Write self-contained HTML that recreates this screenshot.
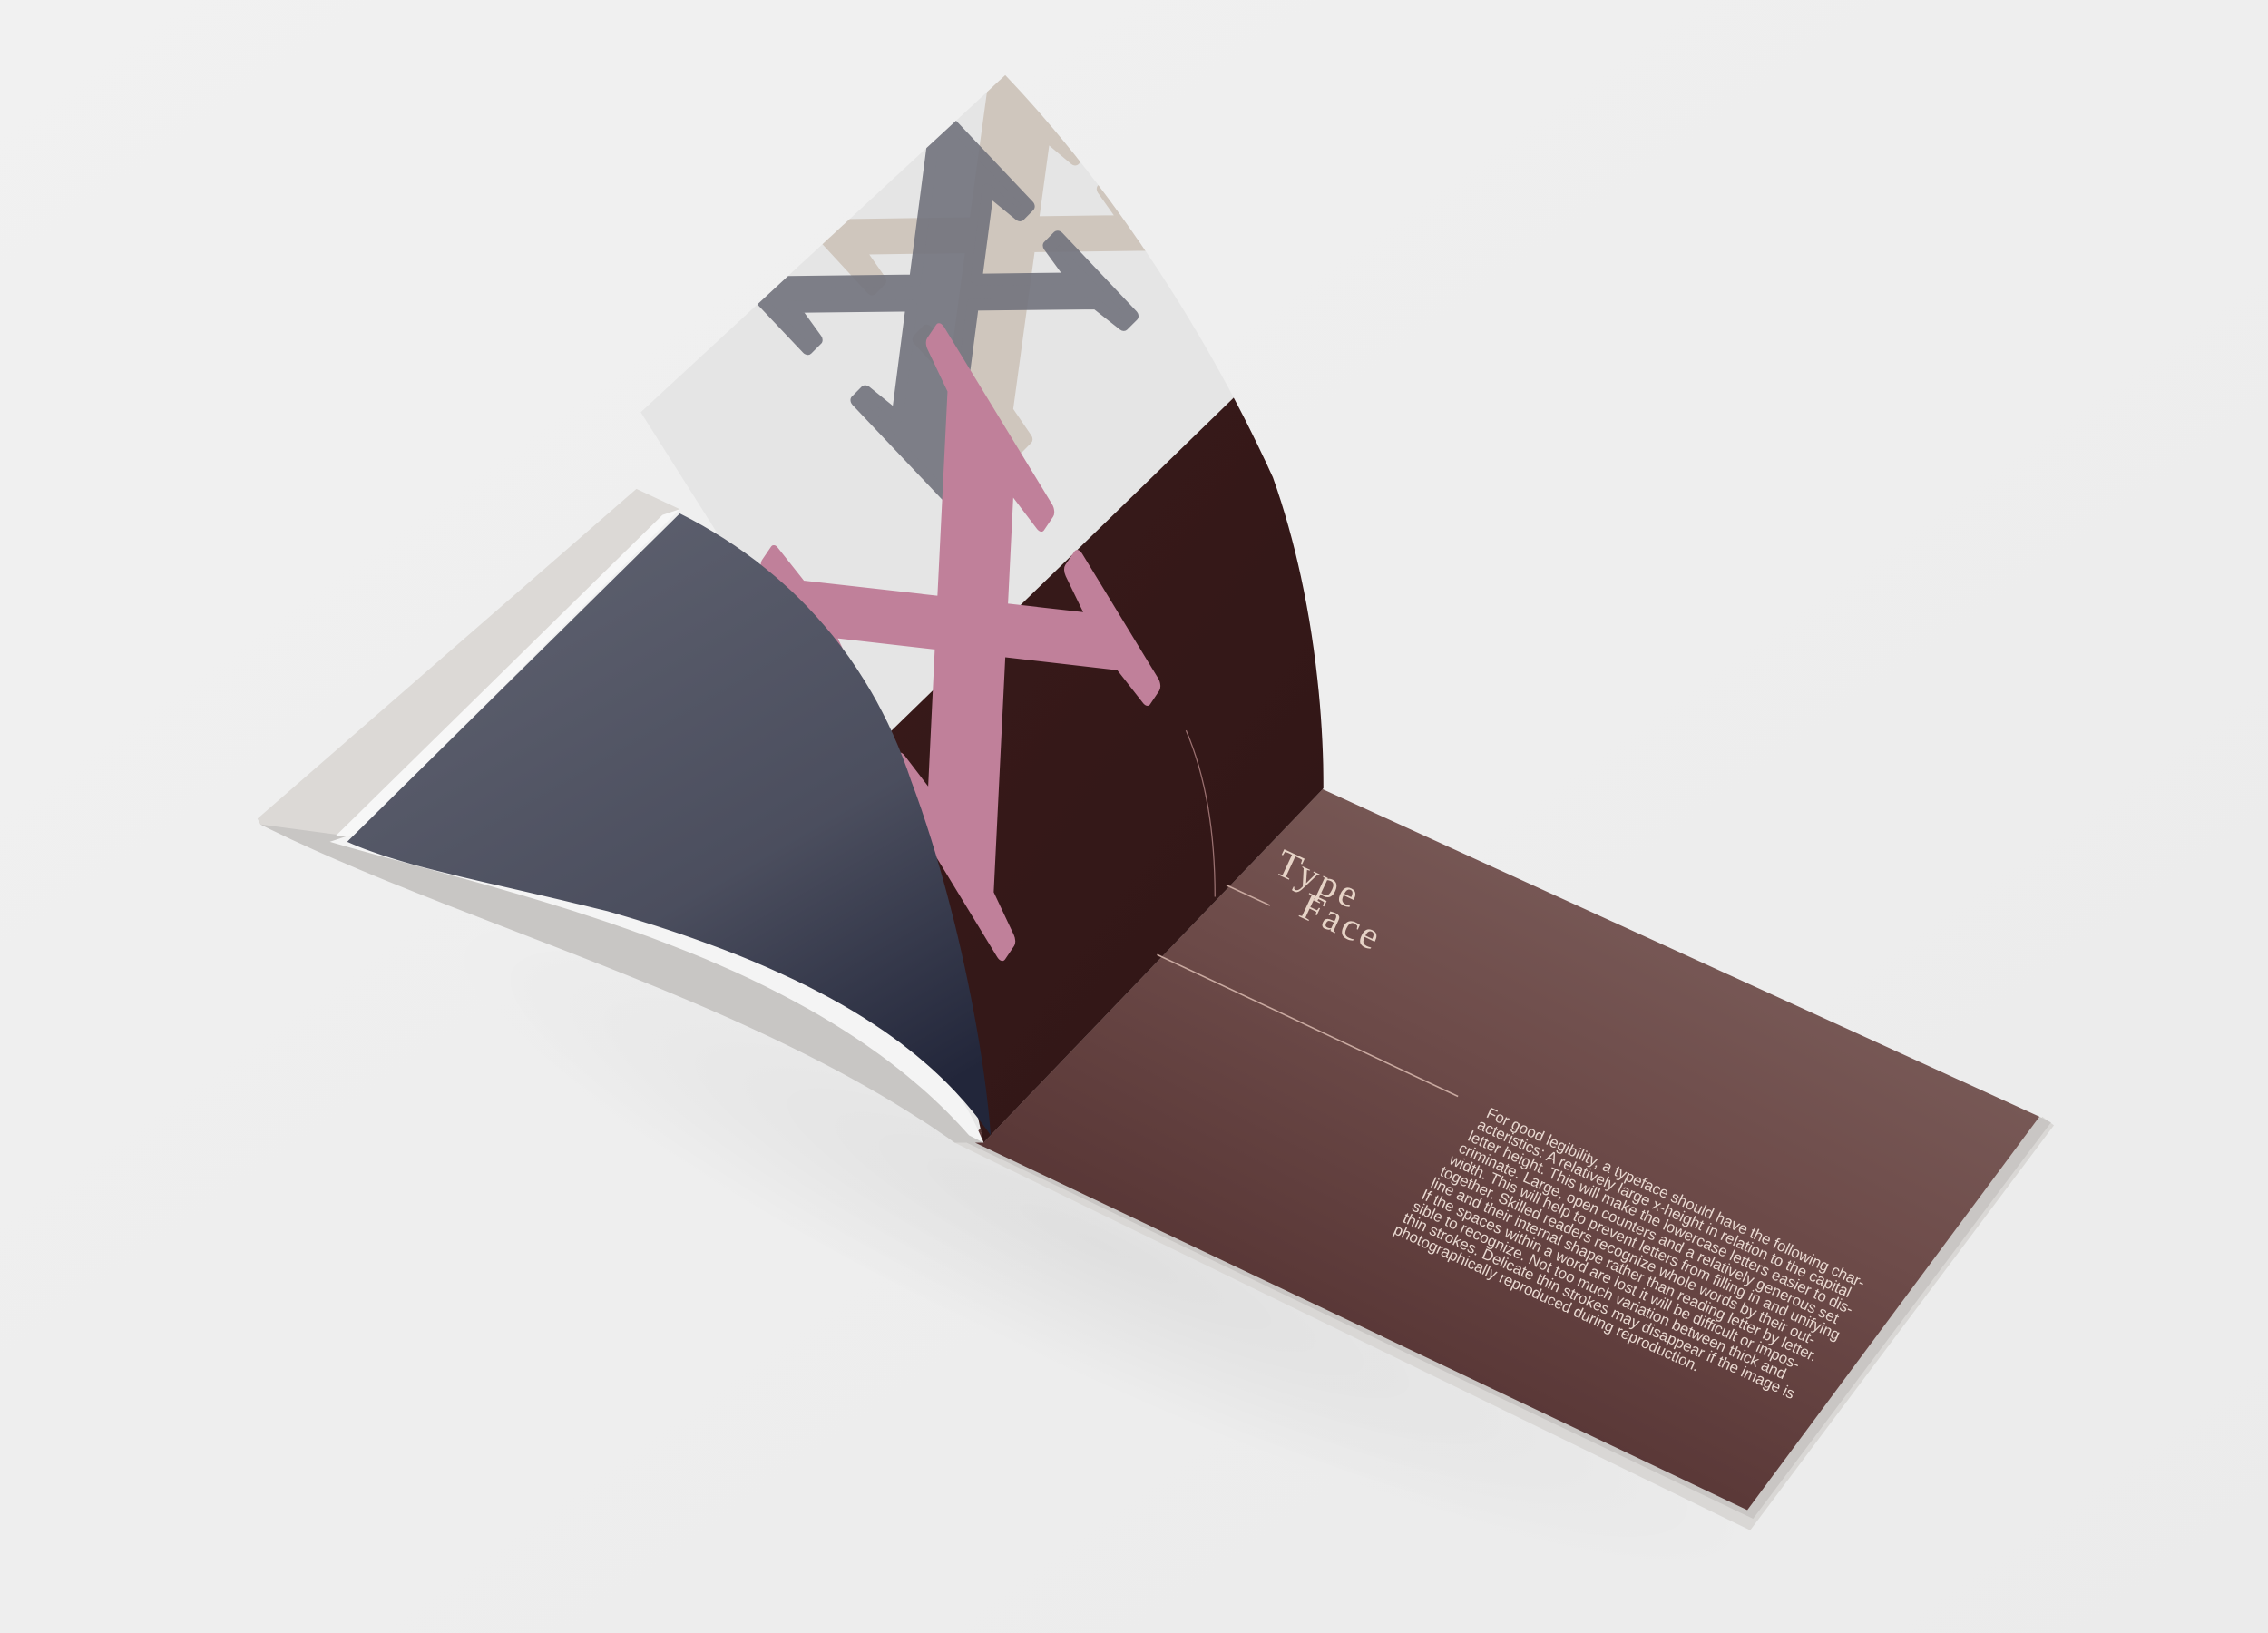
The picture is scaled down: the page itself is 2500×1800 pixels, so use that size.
<!DOCTYPE html>
<html><head><meta charset="utf-8"><style>
html,body{margin:0;padding:0;background:#efefef;}
svg{display:block}
</style></head><body>
<svg width="2500" height="1800" viewBox="0 0 1568 1129" preserveAspectRatio="none" xmlns="http://www.w3.org/2000/svg">
<defs>
<linearGradient id="bg" x1="0" y1="0" x2="1" y2="1"><stop offset="0" stop-color="#f1f1f1"/><stop offset="1" stop-color="#ebebeb"/></linearGradient>
<linearGradient id="rp" x1="0.2" y1="0.9" x2="0.8" y2="0.1"><stop offset="0" stop-color="#4e2c2c"/><stop offset="0.6" stop-color="#6e4c4a"/><stop offset="1" stop-color="#7d605d"/></linearGradient>
<linearGradient id="bl" x1="0.2" y1="0" x2="0.8" y2="1"><stop offset="0" stop-color="#5f6270"/><stop offset="0.6" stop-color="#4b4e5e"/><stop offset="1" stop-color="#22263a"/></linearGradient>
<linearGradient id="br" x1="0" y1="0" x2="1" y2="1"><stop offset="0" stop-color="#3a1b1b"/><stop offset="1" stop-color="#2f1515"/></linearGradient>
<clipPath id="curl"><path d="M443,285 L695,52 C760,120 830,220 880,330 C905,400 915,480 915,545 L680,790 C650,650 600,520 560,470 Z"/></clipPath>
<radialGradient id="sh" cx="0.5" cy="0.5" r="0.5"><stop offset="0" stop-color="#000" stop-opacity="0.06"/><stop offset="1" stop-color="#000" stop-opacity="0"/></radialGradient>
</defs>
<rect width="1568" height="1129" fill="url(#bg)"/>
<ellipse cx="760" cy="860" rx="500" ry="90" fill="url(#sh)" transform="rotate(25 760 860)"/>
<path d="M660,790 L1210,1058 L1420,778 L1412,772 L1205,1045 L668,790 Z" fill="#d9d7d5"/>
<path d="M664,788 L1212,1050 L1418,776 L1410,772 L1208,1042 L670,786 Z" fill="#c9c6c4"/>
<path d="M913,545 L1410,772 L1208,1044 L670,788 Z" fill="url(#rp)"/>
<path d="M440,338 L470,352 L245,575 L228,584 L180,570 L178,566 Z" fill="#dcd9d6"/>
<path d="M180,570 C320,640 520,690 660,790 L680,790 C640,700 520,640 240,578 Z" fill="#c8c6c4"/>
<path d="M228,582 C360,620 560,660 670,785 L680,790 C640,690 520,640 240,578 Z" fill="#f4f4f4"/>
<path d="M232,578 L458,356 L470,352 L245,578 Z" fill="#f7f7f7"/>
<g clip-path="url(#curl)">
<rect x="400" y="40" width="600" height="800" fill="#e5e5e5"/>
<path d="M560,560 L858,270 L960,300 L960,820 L600,820 Z" fill="url(#br)"/>
<g font-family="Liberation Serif, serif" font-size="300" font-weight="bold" text-anchor="middle" stroke-width="8" stroke-linejoin="round">
<text x="0" y="0" fill="#cfc6bd" stroke="#cfc6bd" transform="matrix(0.72,0.78,-0.62,0.63,628,228)">X</text>
<g opacity="0.9"><text x="0" y="0" fill="#72737d" stroke="#72737d" transform="matrix(0.763,0.806,-0.646,0.649,585,270)">X</text></g>
<text x="0" y="0" fill="#c0809a" stroke="#c0809a" transform="matrix(0.78,1.28,-0.588,0.871,610,524)">X</text>
</g>
<path d="M820,505 C835,540 840,580 840,620" stroke="#9a7070" stroke-width="0.8" fill="none"/>
</g>
<path d="M470,355 C540,390 600,450 630,540 C660,620 680,720 685,785 C640,720 560,670 420,630 C340,610 280,600 240,582 Z" fill="url(#bl)"/>
<g fill="#e6d3c6" font-family="Liberation Serif, serif" font-size="27" letter-spacing="2">
<text transform="translate(880,603) rotate(25)">Type</text>
<text transform="translate(897,633) rotate(25)">Face</text>
</g>
<line x1="848" y1="612" x2="878" y2="626" stroke="#c9a9a0" stroke-width="1"/>
<line x1="800" y1="660" x2="1008" y2="758" stroke="#c9a9a0" stroke-width="1"/>
<g fill="#e8d8d0" font-family="Liberation Sans, sans-serif" font-size="10.6" transform="translate(1027,772) rotate(24.5)">
<text x="0" y="0">For good legibility, a typeface should have the following char-</text>
<text x="-2.5" y="10">acteristics: A relatively large x-height in relation to the capital</text>
<text x="-5" y="20">letter height. This will make the lowercase letters easier to dis-</text>
<text x="-7.5" y="30">criminate. Large, open counters and a relatively generous set</text>
<text x="-10" y="40">width. This will help to prevent letters from filling in and unifying</text>
<text x="-12.5" y="50">together. Skilled readers recognize whole words by their out-</text>
<text x="-15" y="60">line and their internal shape rather than reading letter by letter.</text>
<text x="-17.5" y="70">If the spaces within a word are lost it will be difficult or impos-</text>
<text x="-20" y="80">sible to recognize. Not too much variation between thick and</text>
<text x="-22.5" y="90">thin strokes. Delicate thin strokes may disappear if the image is</text>
<text x="-25" y="100">photographically reproduced during reproduction.</text>
</g>
</svg>
</body></html>
